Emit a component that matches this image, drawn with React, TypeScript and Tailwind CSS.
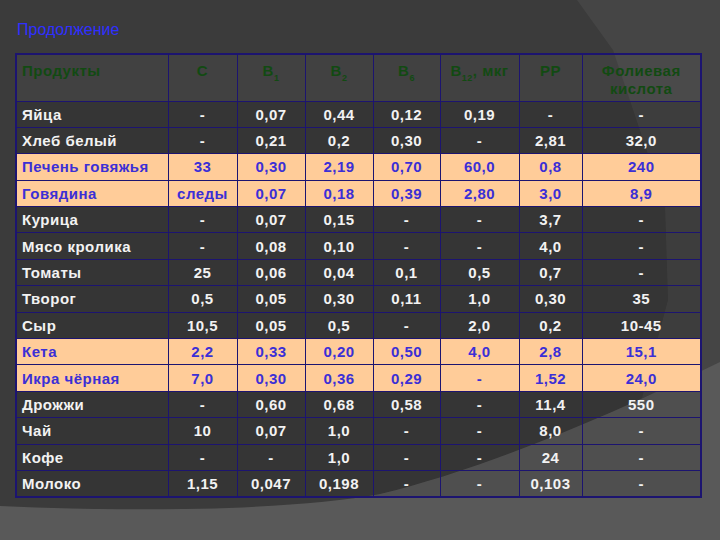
import React from "react";

type Row = { name: string; vals: string[]; hl?: boolean };

const rows: Row[] = [
  { name: "Яйца", vals: ["-", "0,07", "0,44", "0,12", "0,19", "-", "-"] },
  { name: "Хлеб белый", vals: ["-", "0,21", "0,2", "0,30", "-", "2,81", "32,0"] },
  { name: "Печень говяжья", vals: ["33", "0,30", "2,19", "0,70", "60,0", "0,8", "240"], hl: true },
  { name: "Говядина", vals: ["следы", "0,07", "0,18", "0,39", "2,80", "3,0", "8,9"], hl: true },
  { name: "Курица", vals: ["-", "0,07", "0,15", "-", "-", "3,7", "-"] },
  { name: "Мясо кролика", vals: ["-", "0,08", "0,10", "-", "-", "4,0", "-"] },
  { name: "Томаты", vals: ["25", "0,06", "0,04", "0,1", "0,5", "0,7", "-"] },
  { name: "Творог", vals: ["0,5", "0,05", "0,30", "0,11", "1,0", "0,30", "35"] },
  { name: "Сыр", vals: ["10,5", "0,05", "0,5", "-", "2,0", "0,2", "10-45"] },
  { name: "Кета", vals: ["2,2", "0,33", "0,20", "0,50", "4,0", "2,8", "15,1"], hl: true },
  { name: "Икра чёрная", vals: ["7,0", "0,30", "0,36", "0,29", "-", "1,52", "24,0"], hl: true },
  { name: "Дрожжи", vals: ["-", "0,60", "0,68", "0,58", "-", "11,4", "550"] },
  { name: "Чай", vals: ["10", "0,07", "1,0", "-", "-", "8,0", "-"] },
  { name: "Кофе", vals: ["-", "-", "1,0", "-", "-", "24", "-"] },
  { name: "Молоко", vals: ["1,15", "0,047", "0,198", "-", "-", "0,103", "-"] },
];

const thCls =
  "border border-[#1c1470] align-top pt-[7px] leading-[18px] text-center text-[#124a12] font-bold bg-white/[0.03]";

export default function App() {
  return (
    <div
      className="relative w-[720px] h-[540px] overflow-hidden bg-[#3b3b3b] text-[15px] tracking-[0.5px]"
      style={{ fontFamily: '"Liberation Sans", Arial, sans-serif' }}
    >
      <svg className="absolute inset-0" width="720" height="540" viewBox="0 0 720 540">
        <polygon points="577,0 720,0 720,368 642,398 668,300 665,205 613,50" fill="#454545" />
        <path d="M0,506 C150,513 300,509 380,494 C480,470 600,420 720,362 L720,540 L0,540 Z" fill="#595959" />
      </svg>

      <div className="relative h-[53px] pl-[17px] pt-[21px] text-[16px] leading-[18px] tracking-normal text-[#2f2fff]">
        Продолжение
      </div>

      <table className="relative ml-[15px] w-[685px] border-collapse border-2 border-[#1c1470] table-fixed">
        <colgroup>
          <col className="w-[152px]" />
          <col className="w-[69px]" />
          <col className="w-[68px]" />
          <col className="w-[68px]" />
          <col className="w-[67px]" />
          <col className="w-[79px]" />
          <col className="w-[63px]" />
          <col className="w-[119px]" />
        </colgroup>
        <thead>
          <tr className="h-[47px]">
            <th className={thCls + " !text-left pl-[5px]"}>Продукты</th>
            <th className={thCls}>C</th>
            <th className={thCls}>
              B<sub className="text-[9px] align-[-3px]">1</sub>
            </th>
            <th className={thCls}>
              B<sub className="text-[9px] align-[-3px]">2</sub>
            </th>
            <th className={thCls}>
              B<sub className="text-[9px] align-[-3px]">6</sub>
            </th>
            <th className={thCls}>
              B<sub className="text-[9px] align-[-3px]">12</sub>, мкг
            </th>
            <th className={thCls}>PP</th>
            <th className={thCls}>
              Фолиевая
              <br />
              кислота
            </th>
          </tr>
        </thead>
        <tbody>
          {rows.map((r) => (
            <tr key={r.name} className="h-[26.4px]">
              <td
                className={
                  "border border-[#1c1470] pl-[5px] font-bold leading-none " +
                  (r.hl ? "bg-[#ffcc99] text-[#3b2fd6]" : "bg-black/10 text-[#f2f2f2]")
                }
              >
                {r.name}
              </td>
              {r.vals.map((v, i) => (
                <td
                  key={i}
                  className={
                    "border border-[#1c1470] text-center font-bold leading-none " +
                    (r.hl ? "bg-[#ffcc99] text-[#3b2fd6]" : "bg-black/10 text-[#f2f2f2]")
                  }
                >
                  {v}
                </td>
              ))}
            </tr>
          ))}
        </tbody>
      </table>
    </div>
  );
}
